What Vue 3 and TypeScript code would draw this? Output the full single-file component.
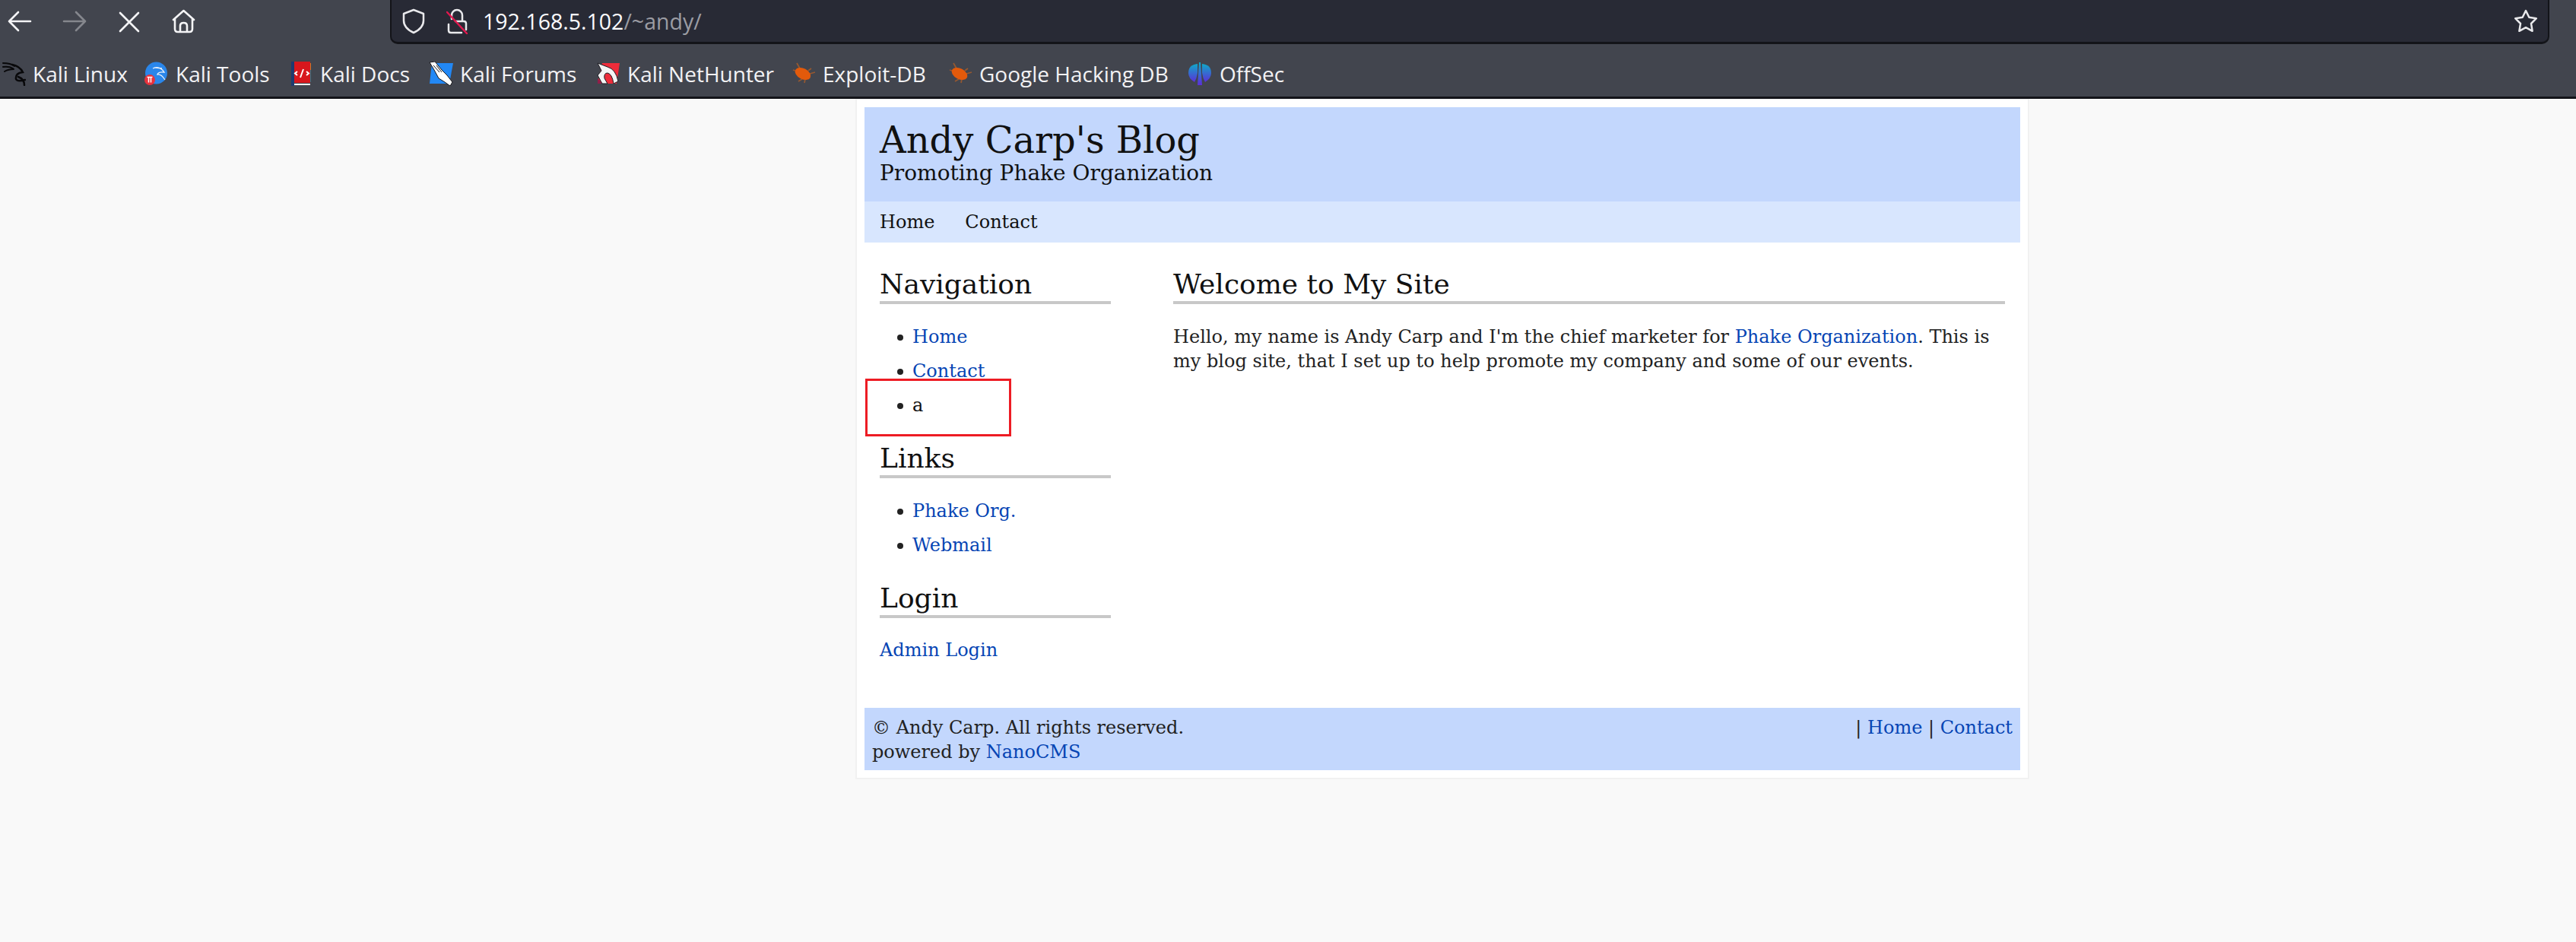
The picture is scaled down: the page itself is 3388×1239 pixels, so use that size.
<script setup lang="ts">
interface Bookmark {
  label: string
  icon: string
  width: number
}

const bookmarks: Bookmark[] = [
  { label: 'Kali Linux', icon: 'dragon', width: 122 },
  { label: 'Kali Tools', icon: 'tools', width: 124 },
  { label: 'Kali Docs', icon: 'docs', width: 118 },
  { label: 'Kali Forums', icon: 'forums', width: 154 },
  { label: 'Kali NetHunter', icon: 'hunter', width: 191 },
  { label: 'Exploit-DB', icon: 'bug', width: 140 },
  { label: 'Google Hacking DB', icon: 'bug', width: 250 },
  { label: 'OffSec', icon: 'offsec', width: 85 },
]
</script>

<template>
  <div class="browser">
    <div class="toolbar">
      <div class="nav-buttons">
        <svg class="tool-icon" width="36" height="36" viewBox="0 0 36 36"><path d="M32 18H4M16 6L4 18L16 30" /></svg>
        <svg class="tool-icon muted" width="36" height="36" viewBox="0 0 36 36"><path d="M4 18H32M20 6L32 18L20 30" /></svg>
        <svg class="tool-icon" width="36" height="36" viewBox="0 0 36 36"><path d="M6 7L30 31M30 7L6 31" /></svg>
        <svg class="tool-icon" width="36" height="36" viewBox="0 0 36 36"><path d="M4 16L17.500 4L31 16M6 15V28Q6 32 10 32H25Q29 32 29 28V15M13 32V24Q13 20 17.500 20Q22 20 22 24V32" /></svg>
      </div>
      <div class="urlbar">
        <svg class="url-icon" width="30" height="34" viewBox="0 0 30 34"><path d="M15 2L28 7V16Q28 26 15 32Q2 26 2 16V7Z" /></svg>
        <svg class="url-icon lock" width="28" height="34" viewBox="0 0 28 34">
          <path d="M7 14V9A7 7 0 0 1 21 9V16" />
          <path d="M3 21V29Q3 32 6 32H20M26 28V20Q26 17 23 17H12" />
          <path class="slash" d="M1 5L27 33" />
        </svg>
        <span class="url-text"><span class="url-host">192.168.5.102</span><span class="url-path">/~andy/</span></span>
        <svg class="url-icon star" width="32" height="32" viewBox="0 0 32 32"><path d="M16 2L20.300 10.800L29.800 12.200L23 19L24.600 28.800L16 24.200L7.400 28.800L9 19L2.200 12.200L11.700 10.800Z" /></svg>
      </div>
    </div>

    <div class="bookmarks">
      <div v-for="b in bookmarks" :key="b.label" class="bookmark">
        <svg v-if="b.icon === 'dragon'" class="fav" width="32" height="32" viewBox="0 0 32 32" fill="none" stroke="#08080a" stroke-linecap="round">
          <path d="M2 2Q12 2 17 6M2 7Q10 6 15 9M4 13Q9 10 16 10" stroke-width="2" />
          <path d="M14 4Q24 6 28 14Q18 15 19 23Q21 27 31 24" stroke-width="2.500" />
          <path d="M22 20Q30 23 30 31" stroke-width="2.500" />
        </svg>
        <svg v-else-if="b.icon === 'tools'" class="fav" width="32" height="32" viewBox="0 0 32 32">
          <circle cx="15.500" cy="15" r="14.500" fill="#2a86ea" />
          <path d="M11 9Q20 5 26 14Q18 13 17 17Q22 16 27 24M15 8L23 9" stroke="#e8f1fb" stroke-width="1.300" fill="none" />
          <circle cx="7" cy="24" r="7" fill="#e8323c" />
          <path d="M3.500 20.500H10.500M5.500 21V27.500M8.500 21V27.500" stroke="#fff" stroke-width="1.500" fill="none" />
        </svg>
        <svg v-else-if="b.icon === 'docs'" class="fav" width="32" height="32" viewBox="0 0 32 32">
          <rect x="3" y="0" width="4" height="32" fill="#1d3a70" />
          <rect x="7" y="0" width="21" height="28" fill="#d8171d" />
          <rect x="7" y="29" width="21" height="2" fill="#f2f2f2" />
          <rect x="28" y="2" width="1" height="9" fill="#c77a2a" />
          <rect x="28" y="11" width="1" height="16" fill="#2b7a8a" />
          <path d="M11 14L8 16.500L11 19M23 14L26 16.500L23 19M19 11L15 22" stroke="#fff" stroke-width="2" fill="none" transform="translate(0 -1)" />
        </svg>
        <svg v-else-if="b.icon === 'forums'" class="fav" width="32" height="32" viewBox="0 0 32 32">
          <path d="M4 2H32L27 29H1Z" fill="#2288f5" />
          <path d="M1 1L8 0L17 11L24 18L31 27L28 32L21 27L13 22L7 11Z" fill="#fff" stroke="#15151a" stroke-width="1" />
          <path d="M6 5L14 14M10 5L17 14" stroke="#15151a" stroke-width="1" />
        </svg>
        <svg v-else-if="b.icon === 'hunter'" class="fav" width="32" height="32" viewBox="0 0 32 32">
          <path d="M8 2H31L27 29H2Z" fill="#ee2c3a" />
          <path d="M2 22L8 29H2Z" fill="#8f1f4a" />
          <path d="M2 2L15 7Q26 10 29 26L23 29Q21 16 15 15Q10 15 11 22L15 29H8L2 18L7 12Z" fill="#f4f4f4" stroke="#1a1a20" stroke-width="1" />
        </svg>
        <svg v-else-if="b.icon === 'bug'" class="fav bug" width="32" height="32" viewBox="0 0 32 32">
          <path d="M2 11L8 13M7 2L11 9M9 26L14 23M17 28L18 23M24 16L31 14M22 12L26 9" stroke="#9a5a30" stroke-width="1.800" fill="none" />
          <ellipse cx="15" cy="16" rx="11" ry="7" fill="#ec5c08" transform="rotate(28 15 16)" />
        </svg>
        <svg v-else class="fav" width="32" height="32" viewBox="0 0 32 32">
          <defs>
            <linearGradient id="offsec-fill" x1="0" y1="0" x2="0" y2="1">
              <stop offset="0" stop-color="#10a9c8" />
              <stop offset="1" stop-color="#5b2fd8" />
            </linearGradient>
          </defs>
          <path d="M12 3Q0 4 0 15Q0 22 8 27Q11 22 12 15Z" fill="url(#offsec-fill)" />
          <path d="M18 3Q30 4 30 15Q30 22 22 27Q19 22 18 15Z" fill="url(#offsec-fill)" />
          <path d="M14 1H16L18 31H12Z" fill="url(#offsec-fill)" />
        </svg>
        <span class="bookmark-label" :style="{ width: `${b.width}px` }">{{ b.label }}</span>
      </div>
    </div>

    <div class="viewport">
      <div class="page">
        <header class="site-head">
          <h1>Andy Carp's Blog</h1>
          <p>Promoting Phake Organization</p>
        </header>
        <nav class="site-nav">
          <a>Home</a>
          <a>Contact</a>
        </nav>
        <div class="columns">
          <aside class="sidebar">
            <h2>Navigation</h2>
            <ul>
              <li><a class="link">Home</a></li>
              <li><a class="link">Contact</a></li>
              <li>a<span class="red-box"></span></li>
            </ul>
            <h2>Links</h2>
            <ul>
              <li><a class="link">Phake Org.</a></li>
              <li><a class="link">Webmail</a></li>
            </ul>
            <h2>Login</h2>
            <p class="login"><a class="link">Admin Login</a></p>
          </aside>
          <main class="content">
            <h2>Welcome to My Site</h2>
            <p>Hello, my name is Andy Carp and I'm the chief marketer for <a class="link">Phake Organization</a>. This is my blog site, that I set up to help promote my company and some of our events.</p>
          </main>
        </div>
        <footer class="site-foot">
          <div>&copy; Andy Carp. All rights reserved.<br />powered by <a class="link">NanoCMS</a></div>
          <div>| <a class="link">Home</a> | <a class="link">Contact</a></div>
        </footer>
      </div>
    </div>
  </div>
</template>

<style scoped>
.browser {
  width: 3388px;
  height: 1239px;
  overflow: hidden;
  background: #f9f9f9;
  display: flex;
  flex-direction: column;
}

.toolbar {
  height: 59px;
  background: #42454e;
  display: flex;
  align-items: flex-start;
  flex-shrink: 0;
}

.nav-buttons {
  width: 513px;
  height: 56px;
  display: flex;
  align-items: center;
  gap: 36px;
  padding-left: 8px;
  box-sizing: border-box;
}

.tool-icon path {
  fill: none;
  stroke: #f4f4f6;
  stroke-width: 2.600;
  stroke-linecap: round;
  stroke-linejoin: round;
}

.tool-icon.muted path {
  stroke: #85878d;
}

.urlbar {
  width: 2840px;
  height: 58px;
  box-sizing: border-box;
  background: #282a35;
  border: solid #131419;
  border-width: 0 2px 3px 2px;
  border-radius: 0 0 10px 10px;
  display: flex;
  align-items: center;
  padding: 0 13px 0 14px;
  font-family: "Open Sans", sans-serif;
}

.url-icon path {
  fill: none;
  stroke: #e9e9ec;
  stroke-width: 2.500;
  stroke-linecap: round;
  stroke-linejoin: round;
}

.url-icon.lock {
  margin-left: 28px;
}

.url-icon.lock .slash {
  stroke: #e0184e;
}

.url-text {
  margin-left: 20px;
  font-size: 28.500px;
  flex: 1;
}

.url-host {
  color: #fbfbfe;
}

.url-path {
  color: #9b9ca3;
}

.bookmarks {
  height: 71px;
  box-sizing: border-box;
  background: #42454e;
  border-bottom: 3px solid #131419;
  display: flex;
  align-items: center;
  gap: 25px;
  padding: 8px 0 0 2px;
  flex-shrink: 0;
  font-family: "Open Sans", sans-serif;
  font-size: 28px;
  color: #f2f2f4;
}

.bookmark {
  display: flex;
  align-items: center;
  gap: 9px;
}

.bookmark-label {
  white-space: nowrap;
}

.fav.bug {
  opacity: 0.95;
}

.viewport {
  flex: 1;
  font-family: "DejaVu Serif", serif;
  font-size: 24px;
  line-height: 32px;
  color: #222;
}

.page {
  width: 1544px;
  margin-left: 1125px;
  padding: 10px;
  box-sizing: border-box;
  background: #fff;
  border: 2px solid #f1f1f1;
  border-top-width: 1px;
}

.site-head {
  height: 124px;
  padding: 15px 20px 0;
  box-sizing: border-box;
  background: #c3d7fd;
  color: #111;
}

.site-head h1 {
  margin: 0;
  font-size: 48px;
  line-height: 56px;
  font-weight: 400;
}

.site-head p {
  margin: -2px 0 0;
  font-size: 28px;
  line-height: 36px;
}

.site-nav {
  height: 54px;
  padding-left: 20px;
  display: flex;
  align-items: center;
  gap: 40px;
  background: #d8e6fe;
  color: #111;
}

.columns {
  display: flex;
  padding: 0 20px;
  height: 612px;
}

.sidebar {
  width: 304px;
  margin-right: 82px;
  flex-shrink: 0;
}

.content {
  flex: 1;
}

h2 {
  margin: 0;
  height: 81px;
  box-sizing: border-box;
  padding-top: 31px;
  font-size: 36px;
  line-height: 48px;
  font-weight: 400;
  color: #111;
  border-bottom: 4px solid #c8c8c8;
}

.sidebar ul + h2 {
  height: 67px;
  padding-top: 17px;
}

.content p {
  margin: 27px 0 0;
}

ul {
  list-style: none;
  margin: 27px 0 0;
  padding: 0 0 0 43px;
}

li {
  margin-bottom: 13px;
  position: relative;
  color: #111;
}

li::before {
  content: "";
  position: absolute;
  left: -20px;
  top: 13px;
  width: 8px;
  height: 8px;
  border-radius: 50%;
  background: #222;
}

.login {
  margin: 26px 0 0;
}

.link {
  color: #0645b4;
}

.red-box {
  position: absolute;
  left: -62px;
  top: -19px;
  width: 192px;
  height: 76px;
  box-sizing: border-box;
  border: 3px solid #ed1c24;
}

.site-foot {
  height: 82px;
  padding: 10px 10px 0;
  box-sizing: border-box;
  background: #c3d7fd;
  display: flex;
  justify-content: space-between;
}
</style>

<style>
html,
body {
  margin: 0;
  background: #f9f9f9;
}
</style>
